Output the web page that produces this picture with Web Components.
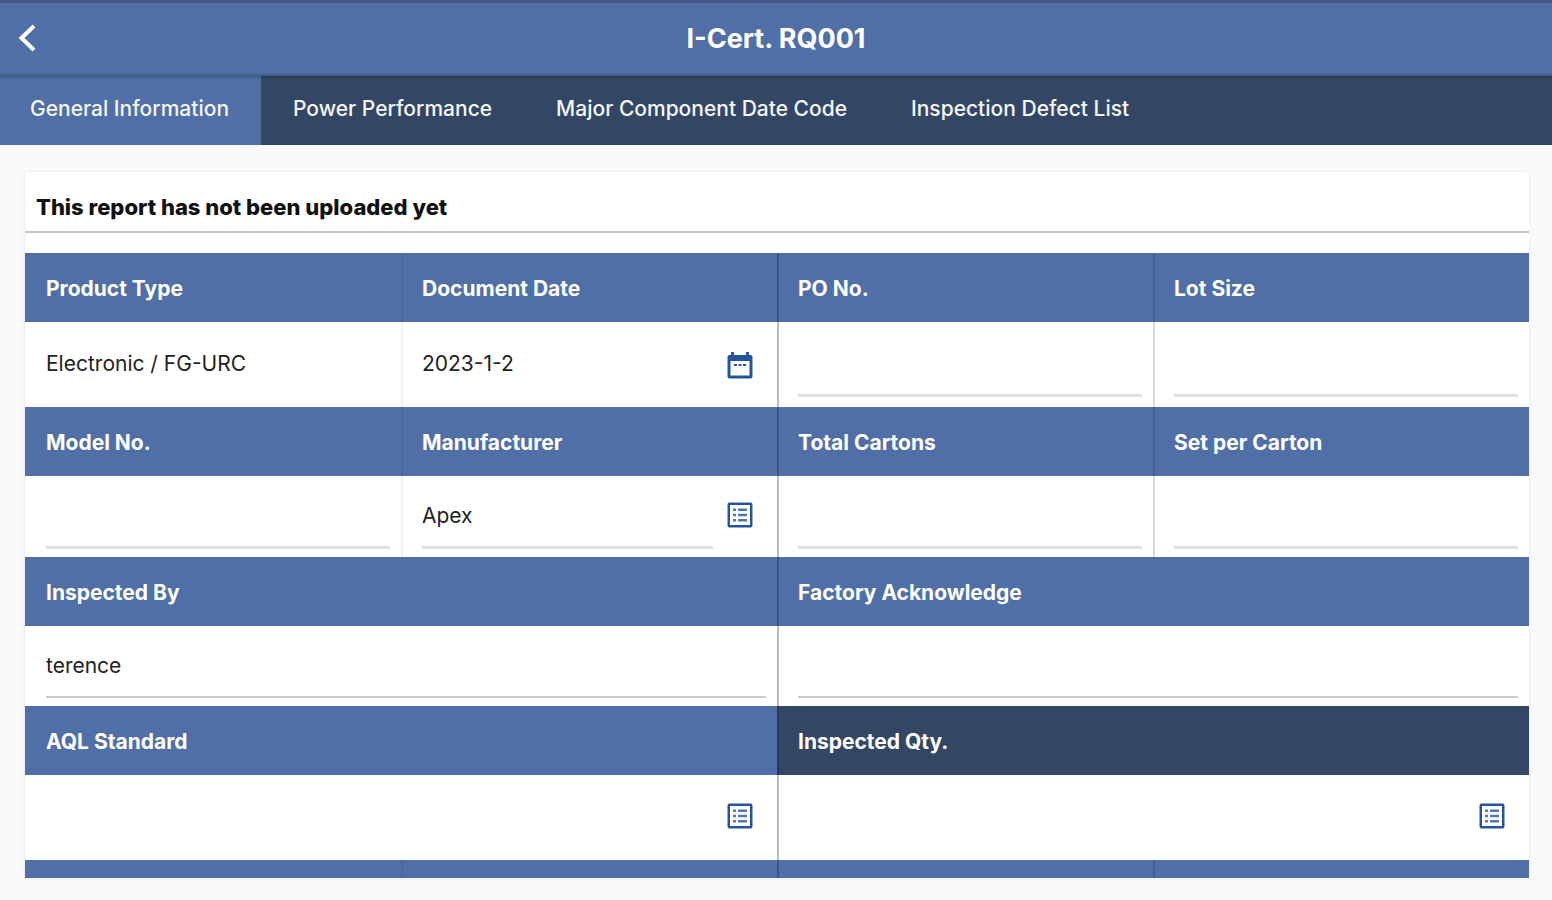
<!DOCTYPE html>
<html lang="en">
<head>
<meta charset="UTF-8">
<meta name="viewport" content="width=device-width, initial-scale=1.0">
<title>I-Cert. RQ001</title>
<style>
    body {
        margin: 0;
        background: #fafafa;
        color: #111;
        font-family: Inter, "Liberation Sans", sans-serif;
        --blue: #506fa7;
        --navy: #334765;
        --icon: #2456a0;
    }

    main {
        padding: 27px 23px 22px 25px;
    }
</style>
</head>
<body>
    <app-bar heading="I-Cert. RQ001"></app-bar>
    <tab-bar>
        <tab-item active>General Information</tab-item>
        <tab-item>Power Performance</tab-item>
        <tab-item>Major Component Date Code</tab-item>
        <tab-item>Inspection Defect List</tab-item>
    </tab-bar>
    <main>
        <report-card>
            <span slot="notice">This report has not been uploaded yet</span>
            <report-field label="Product Type" value="Electronic / FG-URC" size="tall" line="none"></report-field>
            <report-field label="Document Date" value="2023-1-2" size="tall" line="none" icon="calendar" divider="soft"></report-field>
            <report-field label="PO No." size="tall" divider="strong"></report-field>
            <report-field label="Lot Size" size="tall" divider="medium"></report-field>

            <report-field label="Model No."></report-field>
            <report-field label="Manufacturer" value="Apex" icon="list" divider="soft"></report-field>
            <report-field label="Total Cartons" divider="strong"></report-field>
            <report-field label="Set per Carton" divider="medium"></report-field>

            <report-field label="Inspected By" value="terence" wide line="thin"></report-field>
            <report-field label="Factory Acknowledge" wide line="thin" divider="strong"></report-field>

            <report-field label="AQL Standard" wide size="tall" line="none" icon="list"></report-field>
            <report-field label="Inspected Qty." wide dark size="tall" line="none" icon="list" divider="strong"></report-field>

            <report-strip></report-strip>
            <report-strip divider="soft"></report-strip>
            <report-strip divider="strong"></report-strip>
            <report-strip divider="medium"></report-strip>
        </report-card>
    </main>

<script>
/* Top bar with the back button and the report title */

class AppBar extends HTMLElement {
    constructor() {
        super();
        this.attachShadow({ mode: 'open' });
    }

    connectedCallback() {
        this.shadowRoot.innerHTML = `
            <style>
                :host {
                    display: block;
                }

                header {
                    display: grid;
                    grid-template-columns: 56px 1fr 56px;
                    align-items: center;
                    box-sizing: border-box;
                    height: 76px;
                    border-top: 3px solid #43598a;
                    border-bottom: 2px solid #43608f;
                    background: var(--blue);
                    color: white;
                }

                button {
                    display: flex;
                    justify-content: center;
                    padding: 12px;
                    border: none;
                    background: none;
                    color: inherit;
                }

                h1 {
                    margin: 0;
                    text-align: center;
                    font-size: 27px;
                    line-height: 32px;
                    font-weight: 700;
                }
            </style>

            <header>
                <button type="button" aria-label="Back">
                    <svg width="32" height="32" viewBox="0 0 32 32" fill="none" stroke="currentColor" stroke-width="4">
                        <path d="M22 3 9.500 15 22 27"/>
                    </svg>
                </button>
                <h1>${this.getAttribute('heading') || ''}</h1>
            </header>
        `;
    }
}

/* Tabs */

class TabBar extends HTMLElement {
    constructor() {
        super();
        this.attachShadow({ mode: 'open' });
    }

    connectedCallback() {
        this.shadowRoot.innerHTML = `
            <style>
                :host {
                    display: block;
                }

                nav {
                    display: flex;
                    box-sizing: border-box;
                    height: 69px;
                    background: linear-gradient(rgba(0,0,0,0.2), transparent 4px), var(--navy);
                }
            </style>

            <nav><slot></slot></nav>
        `;
    }
}

class TabItem extends HTMLElement {
    constructor() {
        super();
        this.attachShadow({ mode: 'open' });
    }

    connectedCallback() {
        this.shadowRoot.innerHTML = `
            <style>
                :host {
                    display: flex;
                }

                button {
                    padding: 0 32px 4px;
                    border: none;
                    background: none;
                    color: #f4f6fa;
                    font: 500 21px/24px Inter, sans-serif;
                    white-space: nowrap;
                }

                :host([active]) button {
                    padding-left: 30px;
                    background: linear-gradient(rgba(0,0,0,0.15), transparent 4px), var(--blue);
                }
            </style>

            <button type="button"><slot></slot></button>
        `;
    }
}

/* White card: notice line on top, grid of fields below */

class ReportCard extends HTMLElement {
    constructor() {
        super();
        this.attachShadow({ mode: 'open' });
    }

    connectedCallback() {
        this.shadowRoot.innerHTML = `
            <style>
                :host {
                    display: block;
                    background: white;
                    box-shadow: 0 0 3px rgba(0,0,0,0.1);
                }

                p {
                    margin: 0 0 20px;
                    padding: 21px 11px 9px;
                    border-bottom: 2px solid #c6c6c6;
                    font-size: 22px;
                    line-height: 29px;
                    font-weight: 800;
                }

                .grid {
                    display: grid;
                    grid-template-columns: repeat(4, 1fr);
                }
            </style>

            <p><slot name="notice"></slot></p>
            <div class="grid"><slot></slot></div>
        `;
    }
}

const dividerStyles = `
    :host([divider="soft"]) { --divider: rgba(0,0,0,0.06); }
    :host([divider="medium"]) { --divider: rgba(0,0,0,0.15); }
    :host([divider="strong"]) { --divider: rgba(20,30,50,0.3); }
`;

const icons = {
    calendar: `
        <svg width="34" height="34" viewBox="0 0 34 34" fill="currentColor">
            <path fill-rule="evenodd" d="M8 4h3v3h12V4h3v3h1.500a2 2 0 0 1 2 2v19.500a2 2 0 0 1-2 2h-21a2 2 0 0 1-2-2V9a2 2 0 0 1 2-2H8zM7.500 13v14.500h19V13z"/>
            <path d="M11 16h3v2h-3zM15.500 16h3v2h-3zM20 16h3v2h-3z"/>
        </svg>
    `,
    list: `
        <svg width="34" height="34" viewBox="0 2 34 34" fill="currentColor">
            <path fill-rule="evenodd" d="M6.500 4.500h21a2 2 0 0 1 2 2v21a2 2 0 0 1-2 2h-21a2 2 0 0 1-2-2v-21a2 2 0 0 1 2-2zM7 7v20h20V7z"/>
            <path opacity="0.8" d="M10 10.500h3v2.500h-3zM15 10.500h9v2.500h-9zM10 15.750h3v2.500h-3zM15 15.750h9v2.500h-9zM10 21h3v2.500h-3zM15 21h9v2.500h-9z"/>
        </svg>
    `
};

/* Field: label band and value box */

class ReportField extends HTMLElement {
    constructor() {
        super();
        this.attachShadow({ mode: 'open' });
    }

    get label() {
        return this.getAttribute('label') || '';
    }

    get value() {
        return this.getAttribute('value') || '';
    }

    get icon() {
        return this.getAttribute('icon') || '';
    }

    connectedCallback() {
        this.shadowRoot.innerHTML = `
            <style>
                :host {
                    display: flex;
                    flex-direction: column;
                    min-width: 0;
                }

                :host([wide]) {
                    grid-column: span 2;
                }

                ${dividerStyles}

                label {
                    padding: 21px 19px 19px;
                    border-left: 2px solid var(--divider, transparent);
                    background: var(--blue) border-box;
                    color: white;
                    font-size: 21px;
                    line-height: 29px;
                    font-weight: 700;
                }

                :host([dark]) label {
                    background: var(--navy);
                }

                .box {
                    display: flex;
                    align-items: center;
                    gap: 10px;
                    box-sizing: border-box;
                    height: 81px;
                    padding: 0 11px 0 19px;
                    border-left: 2px solid var(--divider, transparent);
                }

                :host([wide]) .box {
                    height: 80px;
                }

                :host([size="tall"]) .box {
                    height: 85px;
                }

                .box.with-icon {
                    padding-right: 20px;
                }

                input {
                    flex: 1;
                    box-sizing: border-box;
                    min-width: 0;
                    height: 64px;
                    padding: 0;
                    border: none;
                    border-bottom: 3px solid #e0e0e0;
                    background: none;
                    color: #222;
                    font: inherit;
                    font-size: 21px;
                    outline: none;
                }

                :host([line="thin"]) input {
                    border-bottom: 2px solid #ccc;
                }

                :host([line="none"]) input {
                    border-bottom-color: transparent;
                }

                button {
                    display: flex;
                    padding: 0;
                    border: none;
                    background: none;
                    color: var(--icon);
                }
            </style>

            <label for="value">${this.label}</label>
            <div class="box ${this.icon ? 'with-icon' : ''}">
                <input id="value" type="text" value="${this.value}">
                ${this.icon ? `<button type="button" aria-label="Choose ${this.label}">${icons[this.icon]}</button>` : ''}
            </div>
        `;
    }
}

/* Closing band of the grid */

class ReportStrip extends HTMLElement {
    constructor() {
        super();
        this.attachShadow({ mode: 'open' });
    }

    connectedCallback() {
        this.shadowRoot.innerHTML = `
            <style>
                :host {
                    display: block;
                    height: 18px;
                    border-left: 2px solid var(--divider, transparent);
                    background: var(--blue);
                }

                ${dividerStyles}
            </style>
        `;
    }
}

customElements.define('app-bar', AppBar);
customElements.define('tab-bar', TabBar);
customElements.define('tab-item', TabItem);
customElements.define('report-card', ReportCard);
customElements.define('report-field', ReportField);
customElements.define('report-strip', ReportStrip);
</script>
</body>
</html>
